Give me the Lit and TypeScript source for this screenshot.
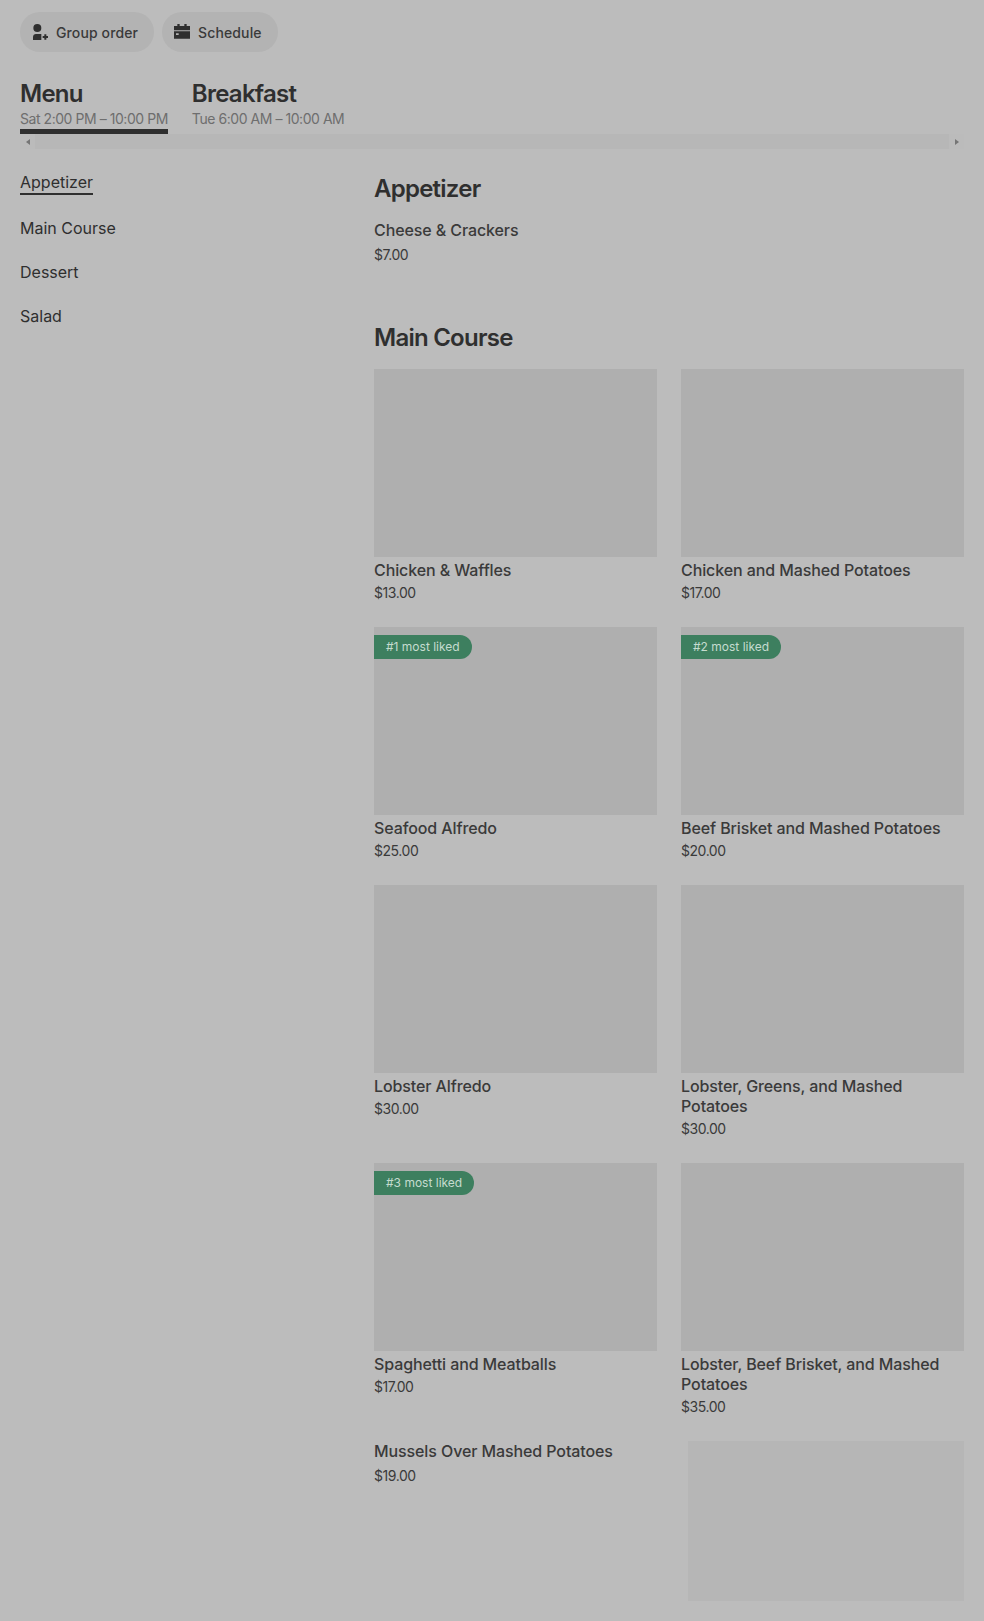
import { LitElement, html, css } from "lit";
import { customElement } from "lit/decorators.js";

interface Item { name: string; price: string; badge?: string; }
const rows: Item[] = [
  { name: "Chicken & Waffles", price: "$13.00" },
  { name: "Chicken and Mashed Potatoes", price: "$17.00" },
  { name: "Seafood Alfredo", price: "$25.00", badge: "#1 most liked" },
  { name: "Beef Brisket and Mashed Potatoes", price: "$20.00", badge: "#2 most liked" },
  { name: "Lobster Alfredo", price: "$30.00" },
  { name: "Lobster, Greens, and Mashed Potatoes", price: "$30.00" },
  { name: "Spaghetti and Meatballs", price: "$17.00", badge: "#3 most liked" },
  { name: "Lobster, Beef Brisket, and Mashed Potatoes", price: "$35.00" },
];

@customElement("app-root")
export class AppRoot extends LitElement {
  static styles = css`
    :host { display: block; height: 1621px; overflow: hidden; background: #bcbcbc; color: #2f2f2f; font-family: Inter, "Liberation Sans", sans-serif; }
    * { box-sizing: border-box; }
    .page { padding: 12px 20px 0; }
    .actions { display: flex; gap: 8px; }
    .pill { height: 40px; border-radius: 20px; background: #b3b3b3; display: flex; align-items: center; gap: 8px; padding: 0 16px 0 12px; font-size: 14px; font-weight: 500; letter-spacing: 0.12px; color: #3a3a3a; }
    .pill svg { width: 16px; height: 16px; fill: #2f2f2f; flex: none; }
    .tabs { display: flex; gap: 24px; margin-top: 26px; }
    .tab { display: flex; flex-direction: column; }
    .tab b { font-size: 24px; line-height: 32px; font-weight: 600; letter-spacing: -0.75px; color: #2f2f2f; }
    .tab span { font-size: 14px; line-height: 18px; color: #6e6e6e; padding-bottom: 1px; letter-spacing: -0.45px; font-weight: 400; }
    .tab.on { border-bottom: 5px solid #2f2f2f; }
    .tab:not(.on) { padding-bottom: 5px; }
    .tabs-wrap { height: 15px; background: #b7b7b7; display: flex; justify-content: space-between; align-items: center; }
    .sb { width: 15px; height: 15px; background: #bbbbbb; display: flex; align-items: center; justify-content: center; }
    .arrow { width: 0; height: 0; border-top: 3px solid transparent; border-bottom: 3px solid transparent; }
    .arrow.l { border-right: 4px solid #757575; }
    .arrow.r { border-left: 4px solid #757575; }
    .body { display: grid; grid-template-columns: 354px 1fr; margin-top: 23px; }
    .side { display: flex; flex-direction: column; align-items: flex-start; gap: 0; }
    .side a { font-size: 16px; line-height: 20px; height: 44px; color: #2f2f2f; letter-spacing: 0; }
    .side a.on { height: 46px; }
    .side a.on span { display: block; border-bottom: 2px solid #2f2f2f; padding-bottom: 1px; line-height: 20px; }
    main { padding-top: 1px; }
    h2 { margin: 0; font-size: 24px; line-height: 32px; font-weight: 600; letter-spacing: -0.75px; color: #2f2f2f; }
    .list-item { margin-top: 15px; height: 102px; }
    .name { font-size: 16px; line-height: 20px; font-weight: 500; color: #3a3a3a; letter-spacing: -0.1px; }
    .price { font-size: 14px; line-height: 20px; color: #3a3a3a; margin-top: 5px; letter-spacing: -0.45px; }
    .grid { display: grid; grid-template-columns: 283px 283px; column-gap: 24px; margin-top: 15px; }
    .card { padding-bottom: 24px; }
    .thumb { position: relative; height: 188px; background: #afafaf; margin-bottom: 3px; }
    .card .price { margin-top: 3px; }
    .badge { position: absolute; left: 0; top: 8px; height: 24px; padding: 0 12px; background: #3d7f5f; color: #c5dccf; font-size: 12px; line-height: 24px; border-radius: 0 12px 12px 0; letter-spacing: 0; }
    .last { display: grid; grid-template-columns: 283px 283px; column-gap: 24px; }
    .ph { height: 160px; margin-left: 7px; background: #b6b6b6; }
  `;

  render() {
    const nav = ["Main Course", "Dessert", "Salad"];
    return html`<div class="page">
      <div class="actions">
        <div class="pill"><svg viewBox="0 0 24 24"><circle cx="8" cy="6" r="6"/><path d="M1.500 24v-4.500c0-2.500 2-4.500 4.500-4.500h8v9H1.500zM18.500 15.500h3v2.500H24v3h-2.500v2.500h-3V21H16v-3h2.500z"/></svg>Group order</div>
        <div class="pill"><svg viewBox="0 0 24 24"><path d="M5 0h3.500v3h7V0H19v3h5v6.500H0V3h5V0zM0 11h24v11H0V11zm3 3v2.500h4V14H3z" fill-rule="evenodd"/></svg>Schedule</div>
      </div>
      <div class="tabs">
        <div class="tab on"><b>Menu</b><span>Sat 2:00 PM – 10:00 PM</span></div>
        <div class="tab"><b>Breakfast</b><span>Tue 6:00 AM – 10:00 AM</span></div>
      </div>
      <div class="tabs-wrap"><div class="sb"><i class="arrow l"></i></div><div class="sb"><i class="arrow r"></i></div></div>
      <div class="body">
        <nav class="side">
          <a class="on"><span>Appetizer</span></a>
          ${nav.map((n) => html`<a>${n}</a>`)}
        </nav>
        <main>
          <h2>Appetizer</h2>
          <div class="list-item"><div class="name">Cheese &amp; Crackers</div><div class="price">$7.00</div></div>
          <h2>Main Course</h2>
          <div class="grid">
            ${rows.map((r) => html`<div class="card">
              <div class="thumb">${r.badge ? html`<div class="badge">${r.badge}</div>` : ""}</div>
              <div class="name">${r.name}</div><div class="price">${r.price}</div>
            </div>`)}
          </div>
          <div class="last">
            <div><div class="name">Mussels Over Mashed Potatoes</div><div class="price">$19.00</div></div>
            <div class="ph"></div>
          </div>
        </main>
      </div>
    </div>`;
  }
}
